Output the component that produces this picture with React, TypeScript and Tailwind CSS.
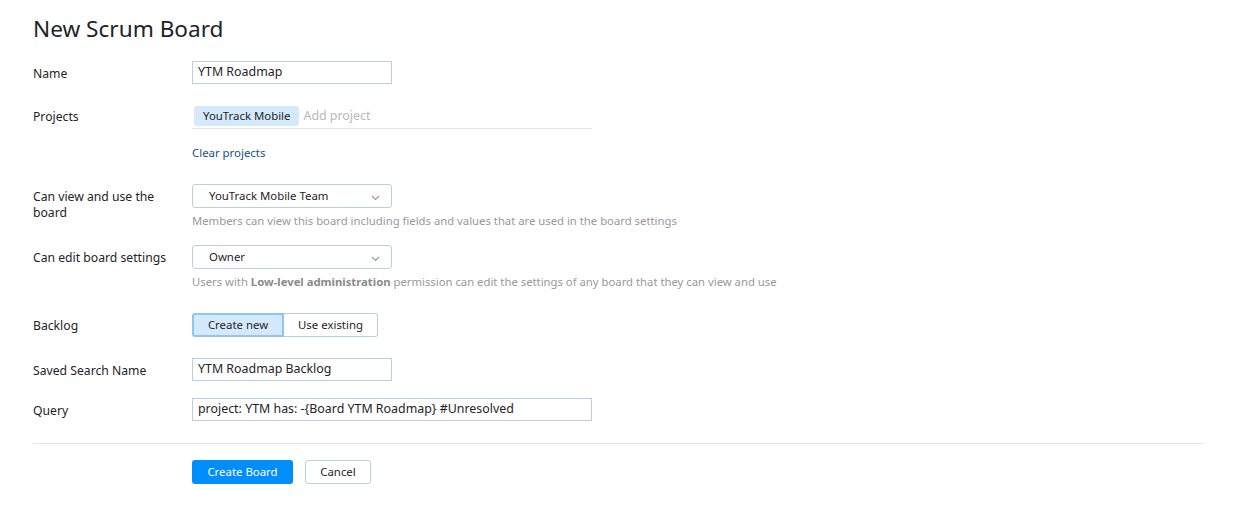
import React from "react";

const Chevron = () => (
  <svg width="9" height="6" viewBox="0 0 9 6" className="absolute right-[11px] top-[10px]">
    <path d="M1 1 L4.5 4.5 L8 1" fill="none" stroke="#9a9a9a" strokeWidth="1.1" />
  </svg>
);

function Label({ children }: { children: React.ReactNode }) {
  return <div className="w-[159px] shrink-0 pt-[4.5px] pr-4 text-[12.2px] leading-[16px] text-[#1f2326]">{children}</div>;
}

export default function App() {
  return (
    <div className="min-h-[515px] bg-white px-[33px] text-[#1f2326]" style={{ fontFamily: '"Noto Sans", "Open Sans", sans-serif' }}>
      <h1 className="pt-[13px] text-[22.6px] leading-[32px] font-normal">New Scrum Board</h1>

      <div className="mt-[16px] flex">
        <Label>Name</Label>
        <div className="flex h-[23px] w-[200px] items-center border border-[#b9d0e3] px-[5px] text-[12.4px]">YTM Roadmap</div>
      </div>

      <div className="mt-[20px] flex">
        <Label>Projects</Label>
        <div>
          <div className="flex h-[25px] w-[400px] items-center gap-[4px] border-b border-[#dfe5eb] pl-[2px]">
            <span className="flex h-[20px] items-center rounded-[3px] bg-[#d4eafc] px-[9px] text-[11.4px]">YouTrack Mobile</span>
            <span className="text-[12.4px] text-[#b8b8b8]">Add project</span>
          </div>
          <div className="mt-[16px] text-[11.4px] leading-[16px] text-[#1a4f80]">Clear projects</div>
        </div>
      </div>

      <div className="mt-[23px] flex">
        <Label>Can view and use the board</Label>
        <div>
          <div className="relative flex h-[24px] w-[200px] items-center rounded-[3px] border border-[#b9d0e3] pl-[16px] text-[11.4px]">
            YouTrack Mobile Team
            <Chevron />
          </div>
          <div className="mt-[5px] text-[11.3px] leading-[16px] text-[#999999]">
            Members can view this board including fields and values that are used in the board settings
          </div>
        </div>
      </div>

      <div className="mt-[16px] flex">
        <Label>Can edit board settings</Label>
        <div>
          <div className="relative flex h-[24px] w-[200px] items-center rounded-[3px] border border-[#b9d0e3] pl-[16px] text-[11.4px]">
            Owner
            <Chevron />
          </div>
          <div className="mt-[5px] text-[11.3px] leading-[16px] text-[#999999]">
            Users with <span className="font-bold text-[#8a8a8a]">Low-level administration</span> permission can edit the settings of any board that they can view and use
          </div>
        </div>
      </div>

      <div className="mt-[23px] flex">
        <Label>Backlog</Label>
        <div className="flex h-[24px] text-[11.4px]">
          <div className="flex w-[92px] items-center justify-center rounded-l-[3px] border-2 border-[#8ec5f3] bg-[#d4eafc]">Create new</div>
          <div className="flex w-[94px] items-center justify-center rounded-r-[3px] border border-l-0 border-[#b9d0e3]">Use existing</div>
        </div>
      </div>

      <div className="mt-[21px] flex">
        <Label>Saved Search Name</Label>
        <div className="flex h-[23px] w-[200px] items-center border border-[#b9d0e3] px-[5px] text-[12.4px]">YTM Roadmap Backlog</div>
      </div>

      <div className="mt-[17px] flex">
        <Label>Query</Label>
        <div className="flex h-[23px] w-[400px] items-center border border-[#b9d0e3] px-[5px] text-[12.4px]">
          project: YTM has: -{"{"}Board YTM Roadmap{"}"} #Unresolved
        </div>
      </div>

      <div className="mt-[22px] w-[1170px] border-t border-[#e3e5e8]" />

      <div className="mt-[16px] flex gap-[12px] pl-[159px]">
        <div className="flex h-[24px] w-[101px] items-center justify-center rounded-[3px] bg-[#008eff] text-[11.4px] text-white">Create Board</div>
        <div className="flex h-[24px] w-[66px] items-center justify-center rounded-[3px] border border-[#b9d0e3] text-[11.4px]">Cancel</div>
      </div>
    </div>
  );
}
